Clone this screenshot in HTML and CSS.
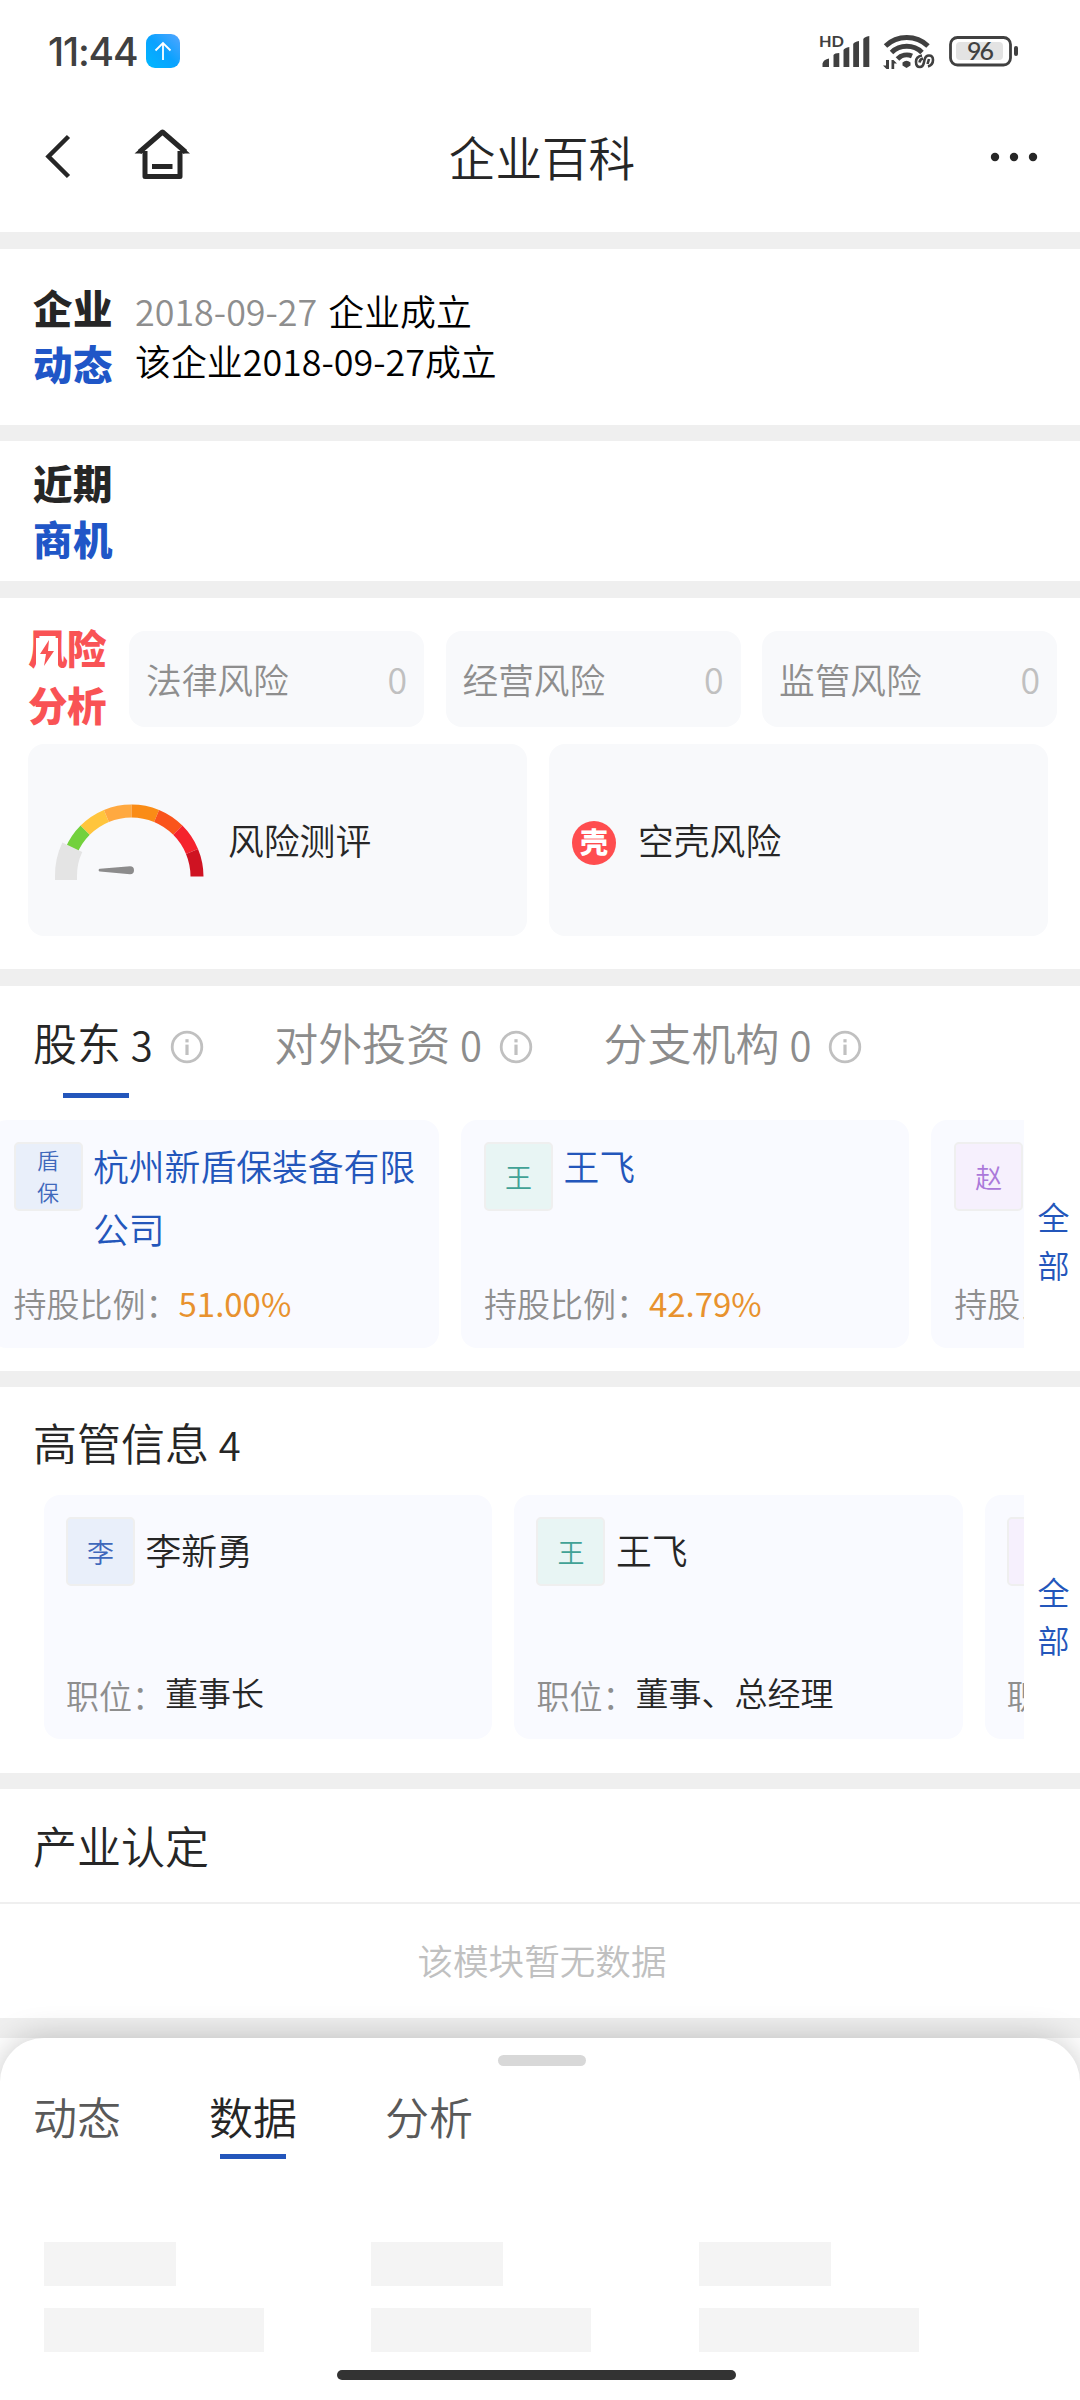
FILE: index.html
```html
<!DOCTYPE html>
<html lang="zh-CN">
<head>
<meta charset="utf-8">
<title>企业百科</title>
<link rel="stylesheet" href="styles.css">
</head>
<body>
<svg class="defs" width="0" height="0">
  <symbol id="info" viewBox="0 0 34 34">
    <circle cx="17" cy="17" r="14.8" fill="none" stroke="currentColor" stroke-width="2.8"/>
    <rect x="15.4" y="9.2" width="3.2" height="3.2" fill="currentColor"/>
    <rect x="15.4" y="14.6" width="3.2" height="10.4" fill="currentColor"/>
  </symbol>
</svg>
<main class="screen">
  <header class="status">
    <span class="clock">11:44</span>
    <svg class="app-dot" width="34" height="34" viewBox="0 0 34 34">
      <defs><linearGradient id="sky" x1="0" y1="1" x2="1" y2="0"><stop offset="0" stop-color="#00b8ff"/><stop offset=".5" stop-color="#0aa2ff"/><stop offset="1" stop-color="#55a5ff"/></linearGradient></defs>
      <rect width="34" height="34" rx="9" fill="url(#sky)"/>
      <path d="M17 26V9M9.5 16.5 17 9l7.500 7.500" fill="none" stroke="#fff" stroke-width="1.8"/>
    </svg>
    <svg class="signals" width="204" height="40" viewBox="816 32 204 40">
      <text x="819" y="47" class="hd" textLength="25" lengthAdjust="spacingAndGlyphs">HD</text>
      <g fill="#404040">
        <path d="M822.500 67v-3.500q1-4 6.500-5v8.500zM833.500 67V55q1-2 5.800-2v14zM843.500 67V50q1-2 5.800-3v20zM853.200 67V44q1-2 5.800-3v26zM863.300 67V39q1-2 6-3v31z"/>
        <path d="M902.500 62.500q4-3.500 8 0v3l-4 2.500-4-2.500z"/>
        <path d="M889 60v9h-2.500l-3.500-3.500h3v-5.500zM891.500 69v-9h2l3.500 3.500h-2.800v5.500z"/>
      </g>
      <g fill="none" stroke="#404040" stroke-width="5">
        <path d="M885.500 46a31 31 0 0 1 42.500 0M891.500 52.500a22 22 0 0 1 30.500 0M897.500 59a13 13 0 0 1 14.500-3"/>
        <path d="M922 55.500q-6 1-6 6.200 0 5.300 4 5.300 3 0 3.800-4l.8-3.500q1-4 4.400-4 4 0 4 4.500 0 5-5 6.500M919.500 62.500q.5-3.500 3.500-4M929 59l-1.500 5" stroke-width="2.600"/>
        <rect x="950.500" y="37.500" width="60" height="27.500" rx="7" stroke-width="2.800"/>
      </g>
      <rect x="956" y="42" width="47" height="18" rx="4" fill="#e3e3e3"/>
      <rect x="1014" y="46" width="4" height="10" rx="2" fill="#404040"/>
      <text x="967" y="60" class="pct" textLength="27">96</text>
    </svg>
  </header>
  <nav class="nav">
    <svg width="150" height="60" viewBox="44 124 150 60" fill="none" stroke="#262626">
      <path d="M68.500 136.500 48.500 156.500l20 20" stroke-width="4.500"/>
      <path d="M139.500 152 162.500 132 185.500 152M145 151v25.500h35V151" stroke-width="5" stroke-linejoin="round"/>
      <path d="M134.500 153.500 142 147v6.500zM190 153.500 182.500 147v6.500z" fill="#262626" stroke="none"/>
      <path d="M152 166.500h20.500" stroke-width="5"/>
    </svg>
    <h1>企业百科</h1>
    <svg width="60" height="20" viewBox="984 147 60 20" fill="#262626"><circle cx="995" cy="157" r="4.200"/><circle cx="1014" cy="157" r="4.200"/><circle cx="1033" cy="157" r="4.200"/></svg>
  </nav>

  <section class="news">
    <h2 class="tag">企业<b>动态</b></h2>
    <div class="news-text"><p><time>2018-09-27</time> 企业成立</p><p>该企业2018-09-27成立</p></div>
  </section>

  <section class="chances"><h2 class="tag">近期<b>商机</b></h2></section>

  <section class="risk">
    <div class="risk-top">
      <h2 class="tag red">风险<b>分析</b>
        <svg class="bolt" width="22" height="30" viewBox="0 0 22 30"><rect width="22" height="30" fill="#fff"/><path d="M13 2 4 16h6L8 28l10-15h-6z" fill="#f95355"/></svg>
      </h2>
      <div class="pill">法律风险<i>0</i></div>
      <div class="pill">经营风险<i>0</i></div>
      <div class="pill">监管风险<i>0</i></div>
    </div>
    <div class="risk-bottom">
      <div class="tile">
        <svg id="gauge" width="154" height="80" viewBox="52 802 154 80">
          <g fill="none" stroke-width="13" transform="translate(131.500 875.500)">
            <path stroke="#73d13d" d="M-60.500-25.100A65.500 65.500 0 0 1-46.300-46.300"/>
            <path stroke="#ffc53d" d="M-46.300-46.300A65.500 65.500 0 0 1-25.100-60.500"/>
            <path stroke="#ffa940" d="M-25.100-60.500A65.500 65.500 0 0 1 0-65.500"/>
            <path stroke="#fa8c16" d="M0-65.500A65.500 65.500 0 0 1 25.100-60.500"/>
            <path stroke="#fa541c" d="M25.100-60.500A65.500 65.500 0 0 1 46.300-46.300"/>
            <path stroke="#f5222d" d="M46.300-46.300A65.500 65.500 0 0 1 60.500-25.100"/>
            <path stroke="#cf1322" d="M60.500-25.100A65.500 65.500 0 0 1 65.500 0"/>
            <path stroke="#e4e4e4" stroke-width="22" d="M-65.500 3.500V0A65.500 65.500 0 0 1-59.200-29.200"/>
          </g>
          <path d="M100 867.800 130 865.200a4 4 0 0 1 0 8L100 870.600a1.400 1.400 0 0 1 0-2.800z" fill="#8c8c8c"/>
        </svg>
        <span>风险测评</span>
      </div>
      <div class="tile shell"><em>壳</em><span>空壳风险</span></div>
    </div>
  </section>

  <section class="holders">
    <div class="tabs">
      <div class="tab on">股东 <small>3</small><svg class="info"><use href="#info"/></svg></div>
      <div class="tab">对外投资 <small>0</small><svg class="info"><use href="#info"/></svg></div>
      <div class="tab">分支机构 <small>0</small><svg class="info"><use href="#info"/></svg></div>
    </div>
    <div class="strip">
      <div class="rail scrolled">
        <article class="card"><div class="who"><span class="avatar blue two">盾<br>保</span><h3>杭州新盾保装备有限公司</h3></div><p>持股比例：<strong>51.00%</strong></p></article>
        <article class="card"><div class="who"><span class="avatar green">王</span><h3>王飞</h3></div><p>持股比例：<strong>42.79%</strong></p></article>
        <article class="card"><div class="who"><span class="avatar purple">赵</span></div><p>持股比例：</p></article>
      </div>
      <a class="all">全<br>部</a>
    </div>
  </section>

  <section class="execs">
    <h2 class="title">高管信息 <small>4</small></h2>
    <div class="strip">
      <div class="rail">
        <article class="card"><div class="who"><span class="avatar blue">李</span><h3>李新勇</h3></div><p>职位：<strong>董事长</strong></p></article>
        <article class="card"><div class="who"><span class="avatar green">王</span><h3>王飞</h3></div><p>职位：<strong>董事、总经理</strong></p></article>
        <article class="card"><div class="who"><span class="avatar purple"></span></div><p>职位：</p></article>
      </div>
      <a class="all">全<br>部</a>
    </div>
  </section>

  <section class="industry">
    <h2 class="title">产业认定</h2>
    <p class="empty">该模块暂无数据</p>
  </section>

  <footer class="sheet">
    <div class="handle"></div>
    <div class="sheet-tabs"><span>动态</span><span class="on">数据</span><span>分析</span></div>
    <div class="skeleton">
      <div><i></i><i></i></div><div><i></i><i></i></div><div><i></i><i></i></div>
    </div>
    <div class="home-bar"></div>
  </footer>
</main>
</body>
</html>
```
FILE: styles.css
```css
* { box-sizing: border-box; margin: 0; padding: 0; }
body { background: #fff; font-family: "Noto Sans CJK SC", sans-serif; font-weight: 350; color: #262626; }
h1, h2, h3 { font-weight: 350; }
i, em { font-style: normal; }
svg { display: block; flex: none; }
.defs { position: absolute; }
.screen { width: 1080px; height: 2400px; overflow: hidden; display: flex; flex-direction: column; }
section { border-top: 16px solid #efefef; flex: none; }

.status { height: 100px; flex: none; display: flex; align-items: flex-start; padding: 32px 60px 0 48px; }
.clock { font: 450 39px/40px Inter, sans-serif; color: #404040; width: 98px; letter-spacing: -1.2px; }
.app-dot { margin-top: 2px; }
.signals { margin-left: auto; }
.hd { font: 700 16px Lato, sans-serif; fill: #404040; }
.pct { font: 500 25px Lato, sans-serif; fill: #404040; }

.nav { height: 132px; flex: none; display: grid; grid-template-columns: 194px 1fr 194px; padding: 0 0 16px; align-items: center; }
.nav svg:first-child { margin-left: 44px; margin-top: -8px; }
.nav svg:last-child { margin-left: 98px; margin-top: -2px; }
.nav h1 { font-size: 46.600px; line-height: 60px; text-align: center; padding-left: 4px; margin-top: -5px; }

.tag { font-size: 39.500px; line-height: 56px; font-weight: 900; letter-spacing: 0.5px; width: 102px; flex: none; white-space: nowrap; }
.tag b { display: block; font-weight: 900; color: #2056c7; }
.news { height: 193px; border-top-width: 17px; display: flex; padding: 30px 33px 0; }
.news-text { padding-top: 6px; font-size: 35.900px; line-height: 50px; color: #000; }
.news time { color: #8e8e8e; margin-right: 3px; }
.chances { height: 156px; padding: 13px 33px 0; }

.risk { height: 388px; border-top-width: 17px; padding: 33px 0 0 28px; }
.risk-top { display: flex; gap: 21.500px; height: 96px; }
.tag.red { color: #f95355; width: 79.500px; line-height: 57px; margin-top: -13px; position: relative; letter-spacing: -0.5px; }
.tag.red b { color: #f95355; }
.bolt { position: absolute; left: 8px; top: 20px; }
.pill { width: 295px; border-radius: 16px; background: #f8f9fb; display: flex; justify-content: space-between; align-items: center; padding: 0 17px 1px 17px; font-size: 35.700px; color: #8e8e8e; }
.pill i { color: #c0c0c0; }
.risk-bottom { display: flex; gap: 22px; margin-top: 17px; }
.tile { width: 499px; height: 192px; border-radius: 16px; background: #f8f9fb; display: flex; align-items: center; font-size: 35.800px; padding: 0 0 3px 24px; gap: 22px; }
.tile svg { margin-top: 8px; }
.shell { padding-left: 23px; gap: 22px; }
.tile em { width: 44px; height: 44px; border-radius: 50%; background: #ff4d4f; color: #fff; font-size: 28px; line-height: 40px; font-weight: 900; text-align: center; margin-top: 8px; }

.holders { height: 402px; border-top-width: 17px; }
.tabs { display: flex; gap: 70.500px; padding: 23px 33px 0; height: 134px; }
.tab { display: flex; align-items: baseline; font-size: 44px; line-height: 66px; color: #8c8c8c; white-space: pre; position: relative; height: 66px; }
small { font-size: 40px; }
.tab.on { color: #262626; }
.tab.on::after { content: ""; position: absolute; left: 30px; top: 84px; width: 66px; height: 5px; background: #2356bb; }
.info { width: 34px; height: 34px; color: #c0c0c0; margin-left: 17px; align-self: flex-start; margin-top: 21px; }
.strip { display: flex; }
.rail { width: 1024px; overflow: hidden; display: flex; gap: 22px; padding-left: 44px; }
.rail.scrolled { padding-left: 0; }
.scrolled .card:first-child { margin-left: -9.500px; }
.card { flex: none; width: 448.400px; height: 228px; border-radius: 16px; background: #f9faff; padding: 22px 22px 0 23px; display: flex; flex-direction: column; }
.who { display: flex; gap: 10.500px; height: 137px; }
.avatar { width: 69px; height: 69px; flex: none; border: 2px solid #efefef; border-radius: 5px; font-size: 27px; line-height: 65px; text-align: center; }
.avatar.two { font-size: 22px; line-height: 31.500px; }
.blue { background: #e9effa; color: #3f68bb; }
.green { background: #e8f5f4; color: #41a296; }
.purple { background: #f6f0fd; color: #ab79da; }
.card h3 { font-size: 35.800px; line-height: 63px; color: #2356bb; margin-top: -8px; margin-right: -4px; }
.card p { font-size: 33px; line-height: 48px; color: #8e8e8e; white-space: nowrap; display: flex; }
.card strong { font-weight: 400; color: #e8922e; }
.all { width: 56px; font-size: 32px; line-height: 48px; color: #2356bb; text-align: center; align-self: center; margin-top: 11px; padding-left: 3px; }

.execs { height: 402px; }
.title { font-size: 44px; line-height: 66px; padding-left: 33px; }
.execs .title { padding-top: 22px; height: 108px; }
.execs .card { height: 244px; padding-left: 22px; }
.execs .card h3 { color: #262626; margin-top: 1px; }
.execs .who { height: 154px; }
.execs .card strong { font-weight: inherit; color: #262626; margin-top: -3px; }
.execs .all { margin-top: -4px; }

.industry { height: 265px; border-bottom: 20px solid #efefef; }
.industry .title { height: 115px; padding-top: 23px; border-bottom: 2px solid #efefef; }
.empty { height: 114px; font-size: 35.600px; line-height: 112px; text-align: center; padding-left: 4px; color: #c0c0c0; }

.sheet { flex: 1; border-radius: 44px 44px 0 0; background: #fff; box-shadow: 0 0 32px rgba(0, 0, 0, .22); position: relative; display: flex; flex-direction: column; }
.handle { width: 88px; height: 11px; border-radius: 6px; background: #d8d8d8; margin: 17px 0 0 498px; }
.sheet-tabs { display: flex; gap: 88px; padding: 17px 0 0 33px; font-size: 44px; line-height: 66px; color: #595959; }
.sheet-tabs .on { color: #262626; position: relative; }
.sheet-tabs .on::after { content: ""; position: absolute; left: 11px; top: 71px; width: 66px; height: 5px; background: #2356bb; }
.skeleton { display: grid; grid-template-columns: repeat(3, 327.400px); padding: 93px 0 0 44px; }
.skeleton i { display: block; width: 132px; height: 44px; background: #f4f4f4; }
.skeleton i + i { width: 220px; margin-top: 22px; }
.home-bar { width: 399px; height: 10px; border-radius: 5px; background: #333; margin: 18px 0 0 337px; }
```
